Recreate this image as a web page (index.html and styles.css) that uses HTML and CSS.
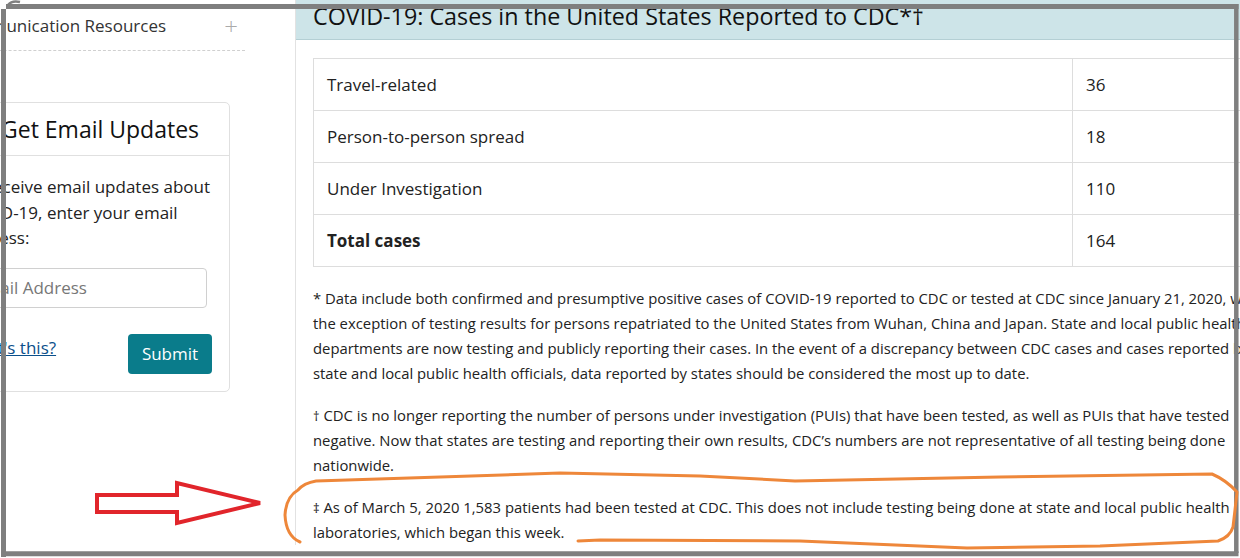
FILE: index.html
```html
<!DOCTYPE html>
<html lang="en">
<head>
<meta charset="utf-8">
<title>COVID-19: Cases in the United States</title>
<link rel="stylesheet" href="styles.css">
</head>
<body>
<div class="page">
  <aside class="sidebar">
    <div class="side-inner">
      <div class="nav-row"><span>Communication Resources</span><span class="plus">+</span></div>
      <div class="card">
        <div class="card-head">
          <span class="env-icon"><svg width="26" height="20" viewBox="0 0 26 20"><rect x="1" y="1" width="24" height="18" rx="2" fill="none" stroke="#333" stroke-width="2"/><path d="M1 2 L13 11 L25 2" fill="none" stroke="#333" stroke-width="2"/></svg></span>
          <h3>Get Email Updates</h3>
        </div>
        <div class="card-body">
          <p>To receive email updates about<br>COVID-19, enter your email<br>address:</p>
          <input class="email" type="text" placeholder="Email Address">
          <div class="card-actions">
            <a href="#">What's this?</a>
            <button type="button">Submit</button>
          </div>
        </div>
      </div>
    </div>
  </aside>
  <main class="main">
    <div class="band"><h2>COVID-19: Cases in the United States Reported to CDC*†</h2></div>
    <div class="content">
      <table class="cases">
        <tr><td>Travel-related</td><td>36</td></tr>
        <tr><td>Person-to-person spread</td><td>18</td></tr>
        <tr><td>Under Investigation</td><td>110</td></tr>
        <tr><th>Total cases</th><td>164</td></tr>
      </table>
      <p class="note">* Data include both confirmed and presumptive positive cases of COVID-19 reported to CDC or tested at CDC since January 21, 2020, with<br>the exception of testing results for persons repatriated to the United States from Wuhan, China and Japan. State and local public health<br>departments are now testing and publicly reporting their cases. In the event of a discrepancy between CDC cases and cases reported by<br>state and local public health officials, data reported by states should be considered the most up to date.</p>
      <p class="note"><span class="mark">†</span> CDC is no longer reporting the number of persons under investigation (PUIs) that have been tested, as well as PUIs that have tested<br>negative. Now that states are testing and reporting their own results, CDC’s numbers are not representative of all testing being done<br>nationwide.</p>
      <p class="note"><span class="mark">‡</span> As of March 5, 2020 1,583 patients had been tested at CDC. This does not include testing being done at state and local public health<br>laboratories, which began this week.</p>
    </div>
  </main>
</div>
<svg class="annot" width="1240" height="558" viewBox="0 0 1240 558">
  <g fill="none" stroke="#7f7f7f" stroke-width="5">
    <path d="M3.5 9 V557"/>
    <path d="M6 6.5 H1238.5"/>
    <path d="M1236.3 4 V553" stroke-width="4.5"/>
    <path d="M1 553.8 H1238.5"/>
    <path d="M8 5 Q12 0 20 2" stroke-width="2.5"/>
  </g>
  <path d="M97 495 H177 V483 L260 503 L177 523 V512 H97 Z" fill="none" stroke="#e1252b" stroke-width="4" stroke-linejoin="miter"/>
  <g fill="none" stroke="#ee873a" stroke-width="3" stroke-linecap="round" stroke-linejoin="round">
    <path d="M300 542 Q286 536 285 515 Q286 497 298 490 Q304 483 316 481 L560 473 L700 476 L795 481 L1000 477 L1212 474 Q1226 480 1237 492 L1235 510 L1233 527 Q1230 537 1218 541 L1100 546 L967 548 L800 541 L600 540 L578 541"/>
  </g>
</svg>
</body>
</html>
```

FILE: styles.css
```css
html, body {
  margin: 0;
  padding: 0;
}
body {
  width: 1240px;
  height: 558px;
  overflow: hidden;
  position: relative;
  background: #fff;
  font-family: "Open Sans", "Noto Sans", sans-serif;
  color: #222;
}
.page {
  display: flex;
  align-items: flex-start;
  width: 1400px;
}
.sidebar {
  flex: none;
  width: 295px;
}
.side-inner {
  margin-left: -56px;
  width: 286px;
}
.nav-row {
  display: flex;
  justify-content: space-between;
  align-items: center;
  width: 301px;
  box-sizing: border-box;
  padding: 13px 7px 12px 10px;
  line-height: 25px;
  font-size: 17px;
  color: #333;
  border-bottom: 1px dashed #d0d0d0;
}
.plus {
  font-size: 24px;
  font-weight: 300;
  color: #aaa;
  line-height: 25px;
}
.card {
  margin-top: 51px;
  border: 1px solid #e0e0e0;
  border-radius: 5px;
  background: #fff;
}
.card-head {
  display: flex;
  align-items: center;
  gap: 13px;
  height: 52px;
  padding: 0 17px;
  border-bottom: 1px solid #e0e0e0;
}
.env-icon {
  display: flex;
}
.card-head h3 {
  margin: 0;
  font-size: 23px;
  font-weight: 400;
  color: #111;
  line-height: 52px;
}
.card-body {
  padding: 18px 17px 17px;
}
.card-body p {
  margin: 0;
  font-size: 17px;
  line-height: 25.5px;
  white-space: nowrap;
  color: #222;
}
.email {
  display: block;
  margin-top: 17px;
  width: 245px;
  height: 40px;
  box-sizing: border-box;
  border: 1px solid #d0d0d0;
  border-radius: 4px;
  padding: 0 12px;
  font-family: inherit;
  font-size: 17px;
  color: #333;
}
.email::placeholder {
  color: #777;
}
.card-actions {
  display: flex;
  justify-content: space-between;
  align-items: flex-start;
  margin-top: 26px;
}
.card-actions a {
  font-size: 17px;
  color: #0b4f8a;
  text-decoration: underline;
  line-height: 25px;
  margin-top: 1px;
}
.card-actions button {
  width: 84px;
  height: 40px;
  border: none;
  border-radius: 4px;
  background: #0a7c8b;
  color: #fff;
  font-family: inherit;
  font-size: 17px;
  padding: 0;
}
.main {
  flex: none;
  width: 1040px;
  border-left: 1px solid #e2e2e2;
}
.band {
  height: 39px;
  background: #cde4e8;
  border-bottom: 1px solid #b4cfd4;
  padding: 0 17px;
}
.band h2 {
  margin: 0;
  font-size: 23.3px;
  font-weight: 400;
  line-height: 32px;
  color: #111;
  white-space: nowrap;
}
.content {
  padding: 18px 17px 0;
}
.cases {
  width: 100%;
  border-collapse: collapse;
  font-size: 17px;
}
.cases tr {
  height: 52px;
}
.cases td, .cases th {
  border: 1px solid #dddddd;
  padding: 0 13px;
  text-align: left;
  color: #222;
}
.cases td:first-child, .cases th {
  width: 732px;
}
.cases th {
  font-weight: 700;
}
.note {
  margin: 19px 0 0;
  font-size: 14.85px;
  line-height: 25px;
  white-space: nowrap;
  color: #222;
}
.note + .note {
  margin-top: 17px;
}
.mark {
  font-size: 13px;
  line-height: 1;
}
.annot {
  position: absolute;
  left: 0;
  top: 0;
  pointer-events: none;
}
```
